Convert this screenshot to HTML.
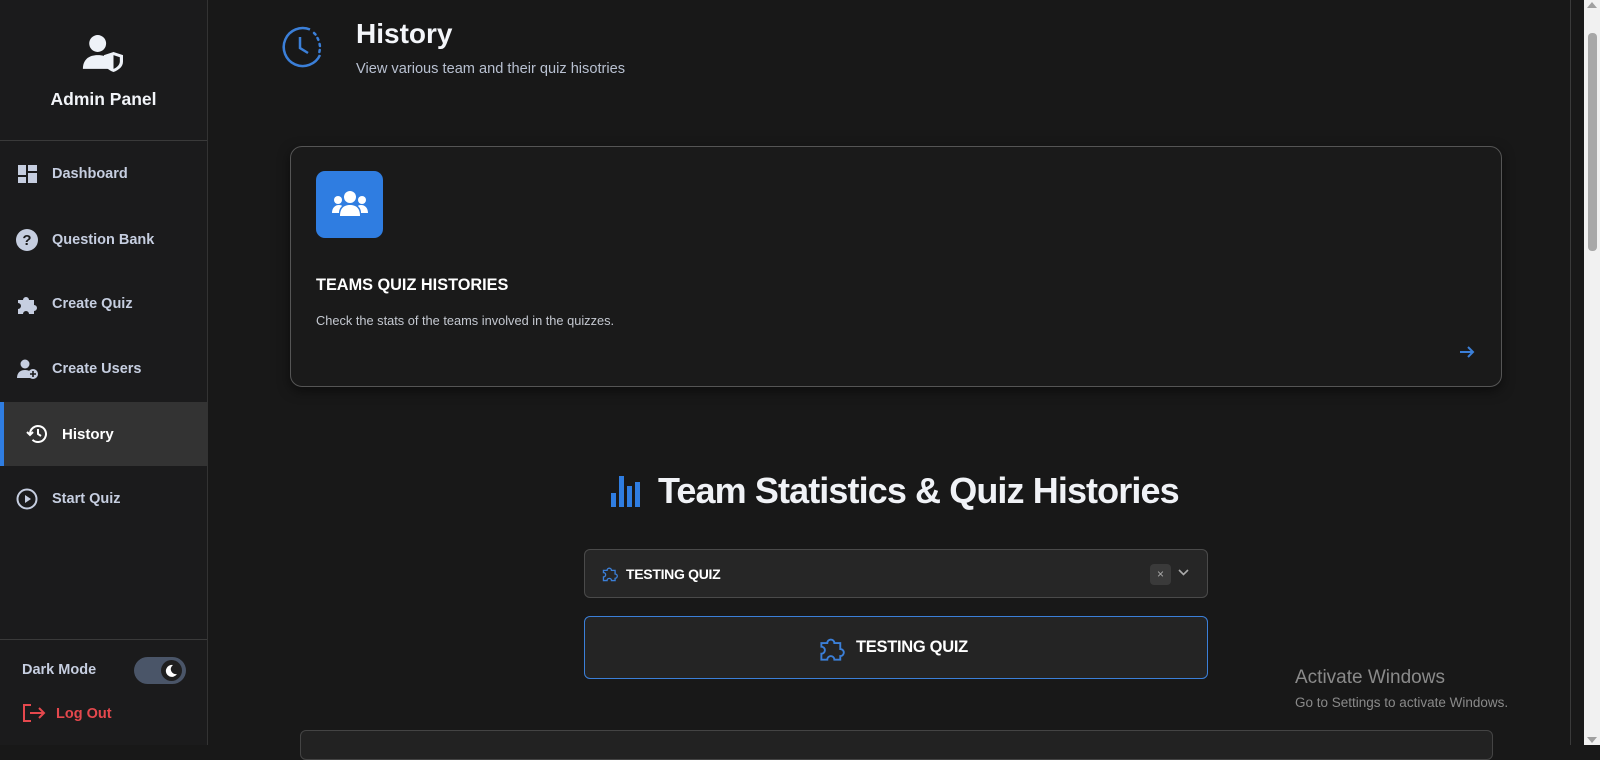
<!DOCTYPE html>
<html><head><meta charset="utf-8"><style>
*{margin:0;padding:0;box-sizing:border-box}
body{width:1600px;height:745px;overflow:hidden;background:#181818;font-family:"Liberation Sans",sans-serif;position:relative;color:#fff}
.sb{position:absolute;left:0;top:0;width:208px;height:745px;background:#1b1b1c;border-right:1px solid #333}
.abs{position:absolute}
.nav{position:absolute;left:0;width:207px;height:64px;display:flex;align-items:center;font-size:14.5px;font-weight:bold;color:#c6cee0}
.nav svg{position:absolute;left:17px}
.nav span{position:absolute;left:52px}
.main{position:absolute;left:209px;top:0;width:1362px;height:745px;background:#181818;border-right:1px solid #3a3a3a}
</style></head><body>
<div class="sb">
  <svg class="abs" style="left:81px;top:34px" width="46" height="38" viewBox="0 0 42 36"><circle cx="15" cy="9" r="8" fill="#eef2f8"/><path d="M1 33c0-9 6-13 14-13 5 0 8 1 10 3v10z" fill="#eef2f8"/><path d="M30 17l9 3v6c0 5-4 8-9 10-5-2-9-5-9-10v-6z" fill="#eef2f8"/><path d="M30 20l6 2v4c0 3-3 6-6 7z" fill="#1b1b1c"/></svg>
  <div class="abs" style="left:0;width:207px;top:89px;text-align:center;font-size:17.5px;font-weight:bold;color:#f2f4f8">Admin Panel</div>
  <div class="abs" style="left:0;top:140px;width:207px;height:1px;background:#3a3a3a"></div>
  <div class="nav" style="top:142px"><svg width="20" height="18" viewBox="0 0 20 18" style="left:18px"><rect x="0" y="0" width="8" height="10" fill="#c6cee0"/><rect x="10" y="0" width="9" height="6" fill="#c6cee0"/><rect x="0" y="12" width="8" height="6" fill="#c6cee0"/><rect x="10" y="8" width="9" height="10" fill="#c6cee0"/></svg><span>Dashboard</span></div>
  <div class="nav" style="top:208px"><svg width="22" height="22" viewBox="0 0 22 22" style="left:16px"><circle cx="11" cy="11" r="11" fill="#c6cee0"/><text x="11" y="16" text-anchor="middle" font-size="15" font-weight="bold" fill="#1b1b1c" font-family="Liberation Sans">?</text></svg><span>Question Bank</span></div>
  <div class="nav" style="top:272px"><svg width="22" height="20" viewBox="0 0 22 20" style="left:16px"><path d="M2 6h5a3 3 0 1 1 6 0h5v5a3 3 0 1 1 0 6v3H13a3 3 0 1 0-6 0H2v-5a3 3 0 1 0 0-6z" fill="#c6cee0"/></svg><span>Create Quiz</span></div>
  <div class="nav" style="top:337px"><svg width="22" height="20" viewBox="0 0 22 20" style="left:17px"><circle cx="8" cy="5" r="4.5" fill="#c6cee0"/><path d="M0 19c0-6 4-8 8-8 2 0 4 .5 5 1.5V19z" fill="#c6cee0"/><circle cx="16" cy="15" r="5" fill="#c6cee0"/><path d="M16 12v6M13 15h6" stroke="#1b1b1c" stroke-width="1.6"/></svg><span>Create Users</span></div>
  <div class="nav" style="top:402px;background:#333;border-left:4px solid #2f7de1"><svg width="22" height="22" viewBox="0 0 22 22" style="left:22px"><path d="M4 11a8 8 0 1 1 2.5 5.8" fill="none" stroke="#fff" stroke-width="2"/><path d="M1 9l3 3 3-3" fill="none" stroke="#fff" stroke-width="2"/><path d="M12 6v5l3 2" fill="none" stroke="#fff" stroke-width="2"/></svg><span style="left:58px;color:#fff;font-size:15px">History</span></div>
  <div class="nav" style="top:467px"><svg width="22" height="22" viewBox="0 0 22 22" style="left:16px"><circle cx="11" cy="11" r="9.5" fill="none" stroke="#c6cee0" stroke-width="2"/><path d="M9 7v8l6-4z" fill="#c6cee0"/></svg><span>Start Quiz</span></div>
  <div class="abs" style="left:0;top:639px;width:207px;height:1px;background:#3a3a3a"></div>
  <div class="abs" style="left:22px;top:662px;font-size:14.5px;font-weight:bold;color:#c6cee0">Dark Mode</div>
  <div class="abs" style="left:134px;top:657px;width:52px;height:27px;border-radius:14px;background:#4a5568"><div class="abs" style="right:4px;top:3px;width:21px;height:21px;border-radius:50%;background:#1f1f1f"></div><svg class="abs" style="right:8px;top:7px" width="13" height="13" viewBox="0 0 13 13"><path d="M8 1a6 6 0 1 0 4 9A5 5 0 0 1 8 1z" fill="#fff"/></svg></div>
  <svg class="abs" style="left:22px;top:703px" width="24" height="20" viewBox="0 0 24 20"><path d="M9 2H2v16h7" fill="none" stroke="#e5484d" stroke-width="2"/><path d="M8 10h14M17 5l5 5-5 5" fill="none" stroke="#e5484d" stroke-width="2"/></svg>
  <div class="abs" style="left:56px;top:706px;font-size:14.5px;font-weight:bold;color:#e5484d">Log Out</div>
</div>
<div class="main"></div>
<svg class="abs" style="left:280px;top:25px" width="44" height="44" viewBox="0 0 44 44"><path d="M30 4.5A19 19 0 1 0 40 30" fill="none" stroke="#3b7fd8" stroke-width="2.5"/><path d="M34 8l1.5 1.5M37.5 13l.8 1.8M39.6 19l.3 2M39.7 25l-.3 2" stroke="#3b7fd8" stroke-width="2.5" stroke-linecap="round"/><path d="M20 12v11l8 5" fill="none" stroke="#3b7fd8" stroke-width="2.5"/></svg>
<div class="abs" style="left:356px;top:18px;font-size:28px;font-weight:bold;color:#f4f6fa">History</div>
<div class="abs" style="left:356px;top:61px;font-size:14.6px;color:#b8c0d0">View various team and their quiz hisotries</div>
<div class="abs" style="left:290px;top:146px;width:1212px;height:241px;border:1.5px solid #555;border-radius:12px;background:#1a1a1a;box-shadow:0 4px 12px rgba(0,0,0,.5)"></div>
<div class="abs" style="left:316px;top:171px;width:67px;height:67px;border-radius:9px;background:#2f7de1"></div>
<svg class="abs" style="left:330px;top:190px" width="40" height="30" viewBox="0 0 40 30"><circle cx="20" cy="7" r="6" fill="#fff"/><circle cx="8" cy="10" r="4" fill="#fff"/><circle cx="32" cy="10" r="4" fill="#fff"/><path d="M10 26c0-8 4-11 10-11s10 3 10 11z" fill="#fff"/><path d="M2 23c0-5 3-8 7-8 2 0 3 .5 3 1-2 2-3 4-3 7z" fill="#fff"/><path d="M38 23c0-5-3-8-7-8-2 0-3 .5-3 1 2 2 3 4 3 7z" fill="#fff"/></svg>
<div class="abs" style="left:316px;top:276px;font-size:16.3px;font-weight:bold;color:#fff">TEAMS QUIZ HISTORIES</div>
<div class="abs" style="left:316px;top:313px;font-size:12.8px;color:#c4c8d0">Check the stats of the teams involved in the quizzes.</div>
<svg class="abs" style="left:1459px;top:345px" width="16" height="14" viewBox="0 0 16 14"><path d="M1 7h13M9 2l5 5-5 5" fill="none" stroke="#3b7fd8" stroke-width="2"/></svg>
<svg class="abs" style="left:611px;top:476px" width="30" height="31" viewBox="0 0 30 31"><rect x="0" y="17" width="5" height="14" fill="#2f7de1"/><rect x="8" y="0" width="5" height="31" fill="#2f7de1"/><rect x="16" y="10" width="5" height="21" fill="#2f7de1"/><rect x="24" y="6" width="5" height="25" fill="#2f7de1"/></svg>
<div class="abs" style="left:658px;top:470px;font-size:36px;font-weight:bold;color:#f0f2f6;letter-spacing:-0.9px">Team Statistics &amp; Quiz Histories</div>
<div class="abs" style="left:584px;top:549px;width:624px;height:49px;border:1px solid #4a4a4a;border-radius:6px;background:#262626"></div>
<svg class="abs" style="left:602px;top:565px" width="16" height="18" viewBox="0 0 22 22"><path d="M2 6h5a3 3 0 1 1 6 0h5v5a3 3 0 1 1 0 6v3H13a3 3 0 1 0-6 0H2v-5a3 3 0 1 0 0-6z" fill="none" stroke="#3b7fd8" stroke-width="1.8"/></svg>
<div class="abs" style="left:626px;top:566px;font-size:14px;font-weight:bold;color:#fff;letter-spacing:-0.3px">TESTING QUIZ</div>
<div class="abs" style="left:1150px;top:564px;width:21px;height:21px;border-radius:4px;background:#3a3a3a;color:#aaa;font-size:12px;text-align:center;line-height:21px">×</div>
<svg class="abs" style="left:1178px;top:569px" width="11" height="8" viewBox="0 0 11 8"><path d="M1 1l4.5 4.5L10 1" fill="none" stroke="#aaa" stroke-width="1.6"/></svg>
<div class="abs" style="left:584px;top:616px;width:624px;height:63px;border:1px solid #3b7fd8;border-radius:6px;background:#242424"></div>
<svg class="abs" style="left:819px;top:636px" width="26" height="26" viewBox="0 0 22 22"><path d="M2 6h5a3 3 0 1 1 6 0h5v5a3 3 0 1 1 0 6v3H13a3 3 0 1 0-6 0H2v-5a3 3 0 1 0 0-6z" fill="none" stroke="#3b7fd8" stroke-width="1.6"/></svg>
<div class="abs" style="left:856px;top:638px;font-size:16.5px;font-weight:bold;color:#fff;letter-spacing:-0.3px">TESTING QUIZ</div>
<div class="abs" style="left:300px;top:730px;width:1193px;height:30px;border:1px solid #444;border-radius:6px;background:#222"></div>
<div class="abs" style="left:1295px;top:667px;font-size:19px;color:#8a8a8a">Activate Windows</div>
<div class="abs" style="left:1295px;top:695px;font-size:13.5px;color:#8a8a8a">Go to Settings to activate Windows.</div>
<div class="abs" style="left:1584px;top:0;width:16px;height:745px;background:#f1f1f1"></div>
<div class="abs" style="left:1588px;top:33px;width:9px;height:218px;border-radius:4px;background:#a8a8a8"></div>
<svg class="abs" style="left:1587px;top:2px" width="10" height="6"><path d="M0 6L5 0l5 6z" fill="#a0a0a0"/></svg>
<svg class="abs" style="left:1587px;top:737px" width="10" height="6"><path d="M0 0l5 6 5-6z" fill="#a0a0a0"/></svg>
</body></html>
